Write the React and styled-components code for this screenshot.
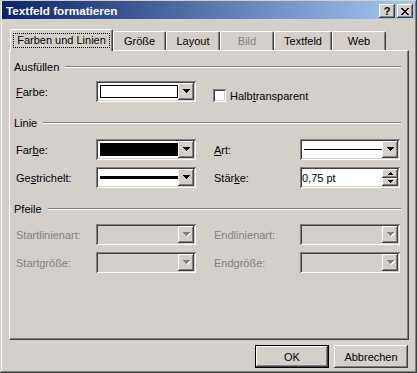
import React from 'react'
import styled, { createGlobalStyle } from 'styled-components'

const GlobalStyle = createGlobalStyle`
  body {
    margin: 0;
    background: #d4d0c8;
    font-family: "Liberation Sans", Arial, sans-serif;
    font-size: 11px;
    color: #000;
  }
`

const raised = `
  box-shadow: inset -1px -1px #404040, inset 1px 1px #ffffff,
    inset -2px -2px #808080, inset 2px 2px #d4d0c8;
`
const sunken = `
  box-shadow: inset 1px 1px #808080, inset -1px -1px #ffffff,
    inset 2px 2px #404040, inset -2px -2px #d4d0c8;
`

const Window = styled.div`
  width: 417px;
  height: 373px;
  box-sizing: border-box;
  padding: 1px 2px 0 2px;
  background: #d4d0c8;
  box-shadow: inset -1px -1px #404040, inset 1px 1px #d4d0c8,
    inset -2px -2px #808080, inset 2px 2px #ffffff;
`

const TitleBar = styled.div`
  height: 18px;
  display: flex;
  align-items: flex-start;
  padding: 0 2px 0 4px;
  background: linear-gradient(to right, #0a246a, #a6caf0);
`

const TitleText = styled.div`
  flex: 1;
  color: #fff;
  font-weight: bold;
  font-size: 11.7px;
  line-height: 18px;
  padding-top: 1px;
`

const TitleButton = styled.div`
  width: 16px;
  height: 14px;
  margin-top: 3px;
  margin-left: ${p => p.$gap || 0}px;
  box-sizing: border-box;
  background: #d4d0c8;
  display: flex;
  align-items: center;
  justify-content: center;
  font-weight: bold;
  font-size: 11px;
  line-height: 14px;
  ${raised}
`

const Content = styled.div`
  padding-left: 7px;
`

const TabStrip = styled.div`
  display: flex;
  align-items: flex-end;
  height: 21px;
  margin-top: 10px;
  padding-left: 1px;
  position: relative;
  z-index: 1;
`

const Tab = styled.div`
  box-sizing: border-box;
  width: ${p => p.$w}px;
  height: ${p => (p.$active ? 22 : 19)}px;
  margin-bottom: ${p => (p.$active ? -1 : 0)}px;
  border-top: 1px solid #fff;
  border-left: 1px solid #fff;
  border-right: 1px solid #404040;
  border-radius: 2px 2px 0 0;
  box-shadow: inset -1px 0 #808080;
  background: #d4d0c8;
  display: flex;
  justify-content: center;
  align-items: flex-start;
  padding-top: ${p => (p.$active ? 3 : 3)}px;
  line-height: 13px;
  color: ${p => (p.$disabled ? '#808080' : '#000')};
`

const FocusLabel = styled.span`
  border: 1px dotted #000;
  padding: 0 3px;
  line-height: 13px;
`

const Panel = styled.div`
  width: 400px;
  height: 290px;
  box-sizing: border-box;
  border: 1px solid;
  border-color: #fff #404040 #404040 #fff;
  box-shadow: inset -1px -1px #808080;
  padding: 9px 7px 0 4px;
`

const GroupHead = styled.div`
  display: flex;
  align-items: center;
  height: 14px;
  margin-top: ${p => p.$top || 0}px;
  &::after {
    content: '';
    flex: 1;
    margin-left: 6px;
    border-top: 1px solid #808080;
    border-bottom: 1px solid #fff;
  }
`

const FormRow = styled.div`
  display: grid;
  grid-template-columns: 80px 100px 18px 86px 100px;
  align-items: center;
  height: 21px;
  padding-left: 2px;
  margin-top: ${p => p.$top || 0}px;
`

const Label = styled.span`
  color: ${p => (p.$disabled ? '#808080' : '#000')};
  grid-column: ${p => p.$col || 'auto'};
  u {
    text-underline-offset: 1px;
  }
`

const ComboBox = styled.div`
  box-sizing: border-box;
  width: 100px;
  height: 21px;
  padding: 2px;
  display: flex;
  background: ${p => (p.$disabled ? '#d4d0c8' : '#fff')};
  grid-column: ${p => p.$col || 'auto'};
  ${sunken}
`

const ComboValue = styled.div`
  flex: 1;
  display: flex;
  align-items: center;
  padding: 0 0 0 2px;
`

const DropButton = styled.div`
  width: 16px;
  height: 17px;
  box-sizing: border-box;
  background: #d4d0c8;
  display: flex;
  align-items: center;
  justify-content: center;
  ${raised}
`

const Swatch = styled.div`
  flex: 1;
  height: 13px;
  box-sizing: border-box;
  border: 1px solid #000;
  background: ${p => p.$fill};
`

const LineSample = styled.div`
  flex: 1;
  height: ${p => p.$weight}px;
  background: #000;
`

const SpinText = styled.div`
  flex: 1;
  display: flex;
  align-items: center;
  padding-left: 0;
`

const SpinButtons = styled.div`
  width: 16px;
  display: flex;
  flex-direction: column;
`

const SpinButton = styled.div`
  height: ${p => p.$h}px;
  box-sizing: border-box;
  background: #d4d0c8;
  display: flex;
  align-items: center;
  justify-content: center;
  ${raised}
`

const CheckCell = styled.label`
  grid-column: 4 / span 2;
  align-self: end;
  display: flex;
  align-items: center;
  gap: 4px;
  margin-left: -1px;
`

const CheckBox = styled.span`
  width: 13px;
  height: 13px;
  box-sizing: border-box;
  background: #fff;
  ${sunken}
`

const ButtonRow = styled.div`
  width: 400px;
  display: flex;
  justify-content: flex-end;
  gap: 5px;
  margin-top: 5px;
  padding-right: 1px;
  box-sizing: border-box;
`

const DialogButton = styled.button`
  width: 74px;
  height: 23px;
  box-sizing: border-box;
  padding: 0;
  font-family: inherit;
  font-size: 11px;
  color: #000;
  background: #d4d0c8;
  border: ${p => (p.$default ? '1px solid #000' : 'none')};
  ${p =>
    p.$default
      ? 'box-shadow: inset -1px -1px #404040, inset 1px 1px #ffffff, inset -2px -2px #808080;'
      : raised}
`

const Tri = ({ rows, up, disabled }) => {
  const w = rows * 2 - 1
  const shape = (dx, dy, fill) =>
    Array.from({ length: rows }, (_, i) => (
      <rect
        key={fill + i}
        x={i + dx}
        y={(up ? rows - 1 - i : i) + dy}
        width={w - 2 * i}
        height={1}
        fill={fill}
      />
    ))
  return (
    <svg width={w + 1} height={rows + 1} shapeRendering="crispEdges" style={{ marginLeft: 1 }}>
      {disabled && shape(1, 1, '#fff')}
      {shape(0, 0, disabled ? '#808080' : '#000')}
    </svg>
  )
}

const CloseGlyph = () => (
  <svg width="8" height="7" shapeRendering="crispEdges" fill="#000">
    <rect x="0" y="0" width="2" height="1" />
    <rect x="6" y="0" width="2" height="1" />
    <rect x="1" y="1" width="2" height="1" />
    <rect x="5" y="1" width="2" height="1" />
    <rect x="2" y="2" width="4" height="1" />
    <rect x="3" y="3" width="2" height="1" />
    <rect x="2" y="4" width="4" height="1" />
    <rect x="1" y="5" width="2" height="1" />
    <rect x="5" y="5" width="2" height="1" />
    <rect x="0" y="6" width="2" height="1" />
    <rect x="6" y="6" width="2" height="1" />
  </svg>
)

const Combo = ({ children, disabled, col }) => (
  <ComboBox $disabled={disabled} $col={col}>
    <ComboValue>{children}</ComboValue>
    <DropButton>
      <Tri rows={4} disabled={disabled} />
    </DropButton>
  </ComboBox>
)

const tabs = [
  { name: 'Größe', w: 53 },
  { name: 'Layout', w: 54 },
  { name: 'Bild', w: 54, disabled: true },
  { name: 'Textfeld', w: 58 },
  { name: 'Web', w: 54 },
]

export default function App() {
  return (
    <Window>
      <GlobalStyle />
      <TitleBar>
        <TitleText>Textfeld formatieren</TitleText>
        <TitleButton>?</TitleButton>
        <TitleButton $gap={2}>
          <CloseGlyph />
        </TitleButton>
      </TitleBar>
      <Content>
        <TabStrip>
          <Tab $w={103} $active>
            <FocusLabel>Farben und Linien</FocusLabel>
          </Tab>
          {tabs.map(t => (
            <Tab key={t.name} $w={t.w} $disabled={t.disabled}>
              {t.name}
            </Tab>
          ))}
        </TabStrip>
        <Panel>
          <GroupHead>Ausfüllen</GroupHead>
          <FormRow $top={7}>
            <Label>
              <u>F</u>arbe:
            </Label>
            <Combo>
              <Swatch $fill="#fff" />
            </Combo>
            <CheckCell>
              <CheckBox />
              <span>
                Halb<u>t</u>ransparent
              </span>
            </CheckCell>
          </FormRow>

          <GroupHead $top={14}>Linie</GroupHead>
          <FormRow $top={9}>
            <Label>
              Far<u>b</u>e:
            </Label>
            <Combo>
              <Swatch $fill="#000" />
            </Combo>
            <Label $col={4}>
              <u>A</u>rt:
            </Label>
            <Combo>
              <LineSample $weight={1} />
            </Combo>
          </FormRow>
          <FormRow $top={7}>
            <Label>
              Ge<u>s</u>trichelt:
            </Label>
            <Combo>
              <LineSample $weight={3} />
            </Combo>
            <Label $col={4}>
              Stär<u>k</u>e:
            </Label>
            <ComboBox>
              <SpinText>0,75 pt</SpinText>
              <SpinButtons>
                <SpinButton $h={9}>
                  <Tri rows={3} up />
                </SpinButton>
                <SpinButton $h={8}>
                  <Tri rows={3} />
                </SpinButton>
              </SpinButtons>
            </ComboBox>
          </FormRow>

          <GroupHead $top={14}>Pfeile</GroupHead>
          <FormRow $top={8}>
            <Label $disabled>Startlinienart:</Label>
            <Combo disabled />
            <Label $disabled $col={4}>
              Endlinienart:
            </Label>
            <Combo disabled />
          </FormRow>
          <FormRow $top={7}>
            <Label $disabled>Startgröße:</Label>
            <Combo disabled />
            <Label $disabled $col={4}>
              Endgröße:
            </Label>
            <Combo disabled />
          </FormRow>
        </Panel>
        <ButtonRow>
          <DialogButton $default>OK</DialogButton>
          <DialogButton>Abbrechen</DialogButton>
        </ButtonRow>
      </Content>
    </Window>
  )
}
